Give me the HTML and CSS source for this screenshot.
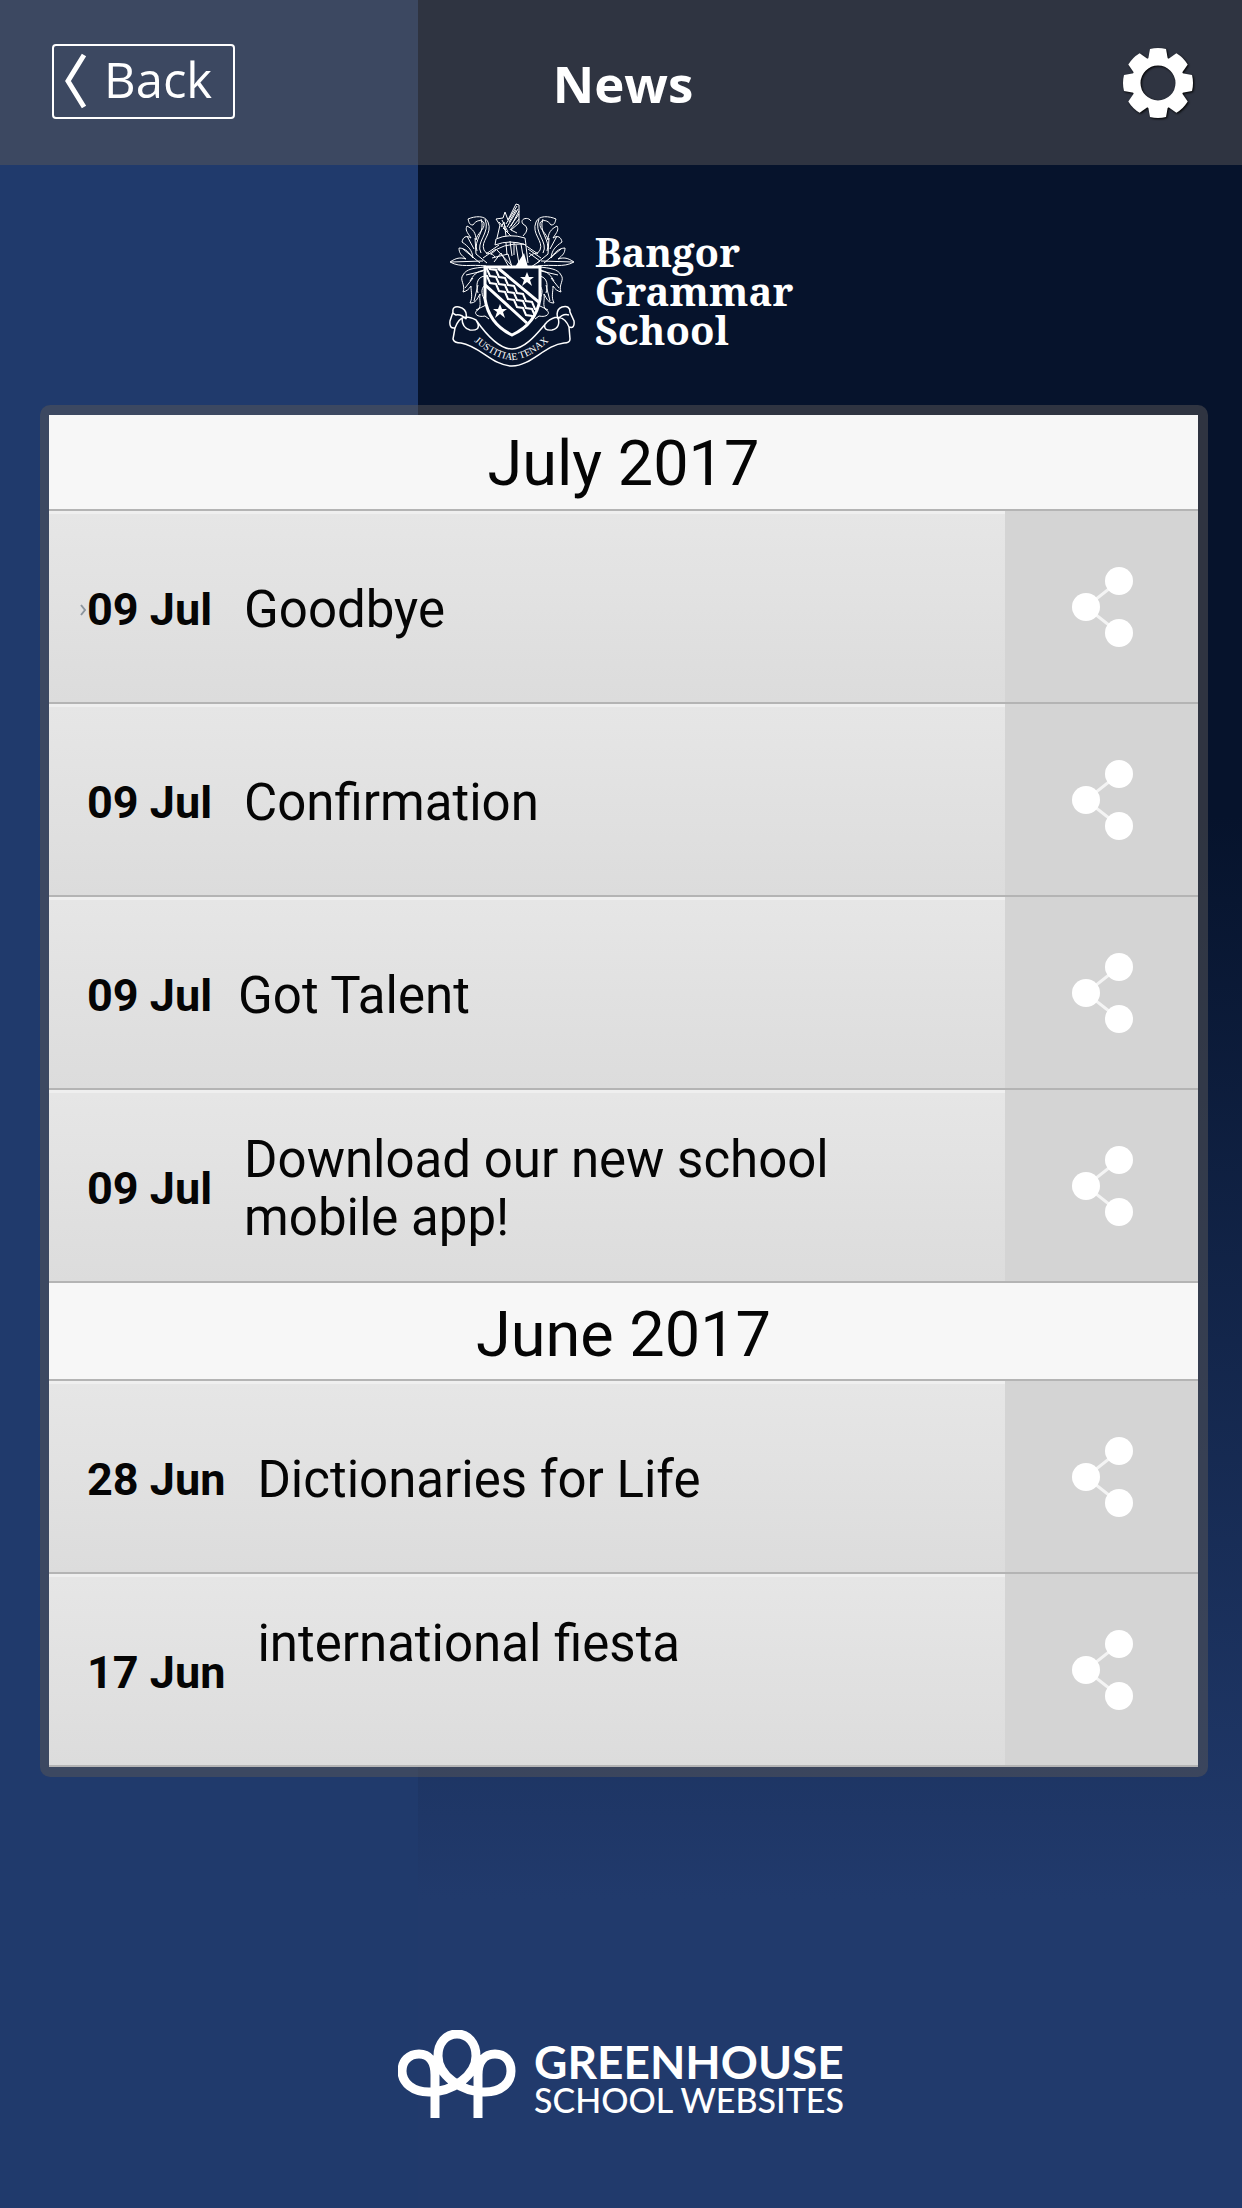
FILE: index.html
```html
<!DOCTYPE html>
<html lang="en">
<head>
<meta charset="utf-8">
<meta name="viewport" content="width=device-width, initial-scale=1">
<title>News - Bangor Grammar School</title>
<link rel="stylesheet" href="styles.css">
</head>
<body>
<svg class="defs" aria-hidden="true">
  <symbol id="share" viewBox="0 0 62 80">
    <path d="M47 14 14 40 47 66" fill="none" stroke="#f4f4f4" stroke-width="3"/>
    <circle cx="47" cy="14" r="14"/><circle cx="14" cy="40" r="14"/><circle cx="47" cy="66" r="14"/>
  </symbol>
</svg>
<header class="bar">
  <button class="back" type="button">
    <svg class="chevron" viewBox="0 0 24 56" aria-hidden="true"><path d="M20 2 4 28 20 54"/></svg>
    <span>Back</span>
  </button>
  <h1 class="title">News</h1>
  <button class="settings" type="button" aria-label="Settings">
    <svg class="gear" viewBox="-36 -36 72 72" aria-hidden="true">
      <g id="teeth">
        <path id="tooth" d="M-10-23-8-34Q0-36 8-34L10-23Z"/>
        <use href="#tooth" transform="rotate(45)"/><use href="#tooth" transform="rotate(90)"/>
        <use href="#tooth" transform="rotate(135)"/><use href="#tooth" transform="rotate(180)"/>
        <use href="#tooth" transform="rotate(225)"/><use href="#tooth" transform="rotate(270)"/>
        <use href="#tooth" transform="rotate(315)"/>
      </g>
      <circle r="22" fill="none" stroke="#fff" stroke-width="9"/>
    </svg>
  </button>
</header>
<main>
  <div class="school">
    <svg class="crest" viewBox="0 0 126 166" aria-hidden="true">
      <defs>
        <clipPath id="shield"><path d="M37 66H90V97Q86 121 63 131 41 121 37 97Z"/></clipPath>
        <g id="mantle" fill="none" stroke="#fff" stroke-width="1">
          <path d="M37 64C22 62 12 66 1 60 7 56 11 55 17 57 12 53 10 51 10 46 16 46 21 51 24 56 23 48 20 45 13 40 14 35 17 33 22 36 18 30 16 28 18 24 24 27 27 31 27 38 28 31 36 28 35 21 33 17 27 18 24 23 20 23 20 20 19 17 26 14 36 13 39 20 44 32 31 39 35 48 37 53 43 50 46 55"/>
          <path d="M36 17C42 31 26 40 32 51M32 17C37 30 24 38 28 49M26 36 27 52 38 61M14 47 31 61M2 60 34 59M18 34 25 47M37 52 50 43M34 56 47 47"/>
          <path d="M36 65C25 66 17 67 14 73 10 78 17 83 14 90 18 89 20 87 22 84 22 91 24 95 21 101 27 101 28 97 31 92 30 99 33 103 29 108 24 110 27 116 36 114L40 117M36 68C27 69 24 74 21 79M36 74C27 75 27 84 29 91M36 83C31 87 33 94 36 98M17 73 34 69M16 86 24 76M25 99 29 83M27 108 37 103"/>
        </g>
      </defs>
      <use href="#mantle"/><use href="#mantle" transform="translate(126 0) scale(-1 1)"/>
      <g fill="none" stroke="#fff" stroke-width="1">
        <path d="M46 43 47 37Q60 31 76 36L77 43Q61 37 46 43ZM48 36 51 23 47 17 54 16 56 10 59 18 67 2 70 3 70 21 62 28 68 31M58 25 69 7M57 22 68 4M60 26 70 12M61 28 70 17M52 25 55 20 57 34M74 34Q82 26 74 22C70 17 79 14 82 19M42 52Q52 41 75 42M43 56 59 52 63 65M45 60 52 51 60 65M48 48 63 64M67 43 70 62M72 42 75 60M77 44 79 61M80 51 91 59 82 65M57 41 58 53M61 39 63 54M65 40 65 53"/>
        <path d="M60 20 67 8M62 24 70 9M50 20 57 28M53 18 59 30M54 26 62 34"/>
      </g>
      <path d="m66 65 9-14 4 14Z" fill="#fff"/>
      <g clip-path="url(#shield)" fill="none" stroke="#fff">
        <path d="M49 66 92 102M34 81 80 123" stroke-width="3"/>
        <path id="wave" d="m32 59 6 1 3 7 6 1 3 7 6 1 3 7 6 1 3 7 6 1 3 7 6 1 3 7 6 1" stroke-width="2"/>
        <use href="#wave" y="7"/><use href="#wave" y="14"/>
      </g>
      <path d="M36 65H91V97Q87 122 63 133 40 122 36 97Z" fill="none" stroke="#fff" stroke-width="3"/>
      <path id="star" d="m78 70 2 5h5l-4 3 2 6-5-4-5 4 2-6-4-3h5Z" fill="#fff"/>
      <use href="#star" x="-27" y="32"/>
      <path d="M17 117Q19 107 10 105Q3 104 4 110L1 119Q0 127 6 126C11 112 19 114 27 118 34 128 49 147 63 147 77 147 90 129 98 120 106 113 115 113 120 125Q126 127 125 119L121 110Q121 103 113 105 106 108 109 117M17 117Q12 112 7 113 3 111 4 110M109 117Q114 111 120 113M6 126 4 137Q5 141 12 141C31 144 44 164 63 164S96 143 115 141Q121 141 121 137L120 125M13 116Q13 126 21 128 31 129 29 122L27 118M109 115Q112 126 103 128 94 129 96 122" fill="none" stroke="#fff" stroke-width="1.5"/>
      <path id="motto" d="M26 140Q46 157 63 158 80 157 99 140" fill="none"/>
      <text class="motto"><textPath href="#motto" startOffset="50%">JUSTITIAE TENAX</textPath></text>
    </svg>
    <p class="school-name">Bangor<br>Grammar<br>School</p>
  </div>
  <div class="panel">
    <section>
      <h2 class="month">July 2017</h2>
      <ul class="list">
        <li class="row"><a class="item" href="#"><svg class="mark" viewBox="0 0 6 12" aria-hidden="true"><path d="M1 1 5 6 1 11"/></svg><time>09 Jul</time><span>Goodbye</span></a><button class="share" type="button" aria-label="Share Goodbye"><svg><use href="#share"/></svg></button></li>
        <li class="row"><a class="item" href="#"><time>09 Jul</time><span>Confirmation</span></a><button class="share" type="button" aria-label="Share Confirmation"><svg><use href="#share"/></svg></button></li>
        <li class="row"><a class="item near" href="#"><time>09 Jul</time><span>Got Talent</span></a><button class="share" type="button" aria-label="Share Got Talent"><svg><use href="#share"/></svg></button></li>
        <li class="row"><a class="item" href="#"><time>09 Jul</time><span>Download our new school mobile app!</span></a><button class="share" type="button" aria-label="Share Download our new school mobile app!"><svg><use href="#share"/></svg></button></li>
      </ul>
    </section>
    <section>
      <h2 class="month">June 2017</h2>
      <ul class="list">
        <li class="row"><a class="item" href="#"><time>28 Jun</time><span>Dictionaries for Life</span></a><button class="share" type="button" aria-label="Share Dictionaries for Life"><svg><use href="#share"/></svg></button></li>
        <li class="row"><a class="item" href="#"><time>17 Jun</time><span class="two-line">international fiesta</span></a><button class="share" type="button" aria-label="Share international fiesta"><svg><use href="#share"/></svg></button></li>
      </ul>
    </section>
  </div>
</main>
<footer class="footer">
  <svg class="trees" viewBox="0 0 118 88" aria-hidden="true">
    <path d="M37 88V45C37 31 31 24 21 24 11 24 4 31 4 41 4 53 15 62 31 62 55 62 78 45 78 26 78 13 70 4 59 4S40 13 40 26C40 45 63 62 87 62 103 62 113 53 113 41 113 31 107 24 97 24 87 24 80 31 80 45V88"/>
  </svg>
  <p class="brand"><span class="brand-top">GREENHOUSE</span><span class="brand-sub">SCHOOL WEBSITES</span></p>
</footer>
</body>
</html>
```
FILE: styles.css
```css
* { box-sizing: border-box; }

body {
  margin: 0;
  min-height: 100vh;
  display: flex;
  flex-direction: column;
  font-family: Roboto, sans-serif;
  color: #050505;
  background:
    linear-gradient(#06132c 0, #06132c 37%, #213a6c 86%) right / calc(100% - 418px) 100% no-repeat,
    #203a6c;
}

h1, h2, p, ul { margin: 0; padding: 0; }
button { margin: 0; padding: 0; border: 0; background: none; cursor: pointer; }
.defs { position: absolute; width: 0; height: 0; }

.bar {
  display: grid;
  grid-template-columns: 1fr auto 1fr;
  align-items: center;
  height: 165px;
  padding: 0 48px 0 52px;
  background: rgba(88, 86, 86, .5);
  color: #fff;
}

.back {
  display: flex;
  align-items: center;
  gap: 16px;
  width: 183px;
  height: 75px;
  margin-bottom: 2px;
  padding: 0 0 2px 10px;
  border: 2px solid #fff;
  border-radius: 4px;
  color: #fff;
  font: 49px/60px "Open Sans", sans-serif;
}

.back span { padding-bottom: 4px; }
.chevron { width: 24px; height: 56px; fill: none; stroke: #fff; stroke-width: 5; }
.title { font: 700 51px/72px "Open Sans", sans-serif; }
.settings { justify-self: end; width: 72px; height: 72px; }
.gear { width: 72px; height: 72px; fill: #fff; filter: drop-shadow(1px 1px 1px #000); }

.school {
  display: flex;
  justify-content: center;
  align-items: center;
  gap: 20px;
  height: 240px;
  color: #fff;
}

.crest { width: 126px; height: 166px; }
.motto { font: 10px "Liberation Serif", serif; fill: #fff; text-anchor: middle; }
.school-name { padding-top: 10px; font: 700 40px/39px "Noto Serif", "Droid Serif", "DejaVu Serif", serif; }

.panel {
  margin: 0 34px 0 40px;
  padding: 10px 10px 10px 9px;
  border-radius: 10px;
  background: rgba(88, 86, 86, .5);
}

.month {
  height: 96px;
  border-bottom: 2px solid #b4b4b4;
  background: #f7f7f7;
  font-size: 63px;
  font-weight: 400;
  line-height: 98px;
  text-align: center;
}

section + section .month { height: 98px; line-height: 104px; }

.list { list-style: none; }
.row { display: flex; height: 193px; border-bottom: 2px solid #b4b4b4; }

.item {
  position: relative;
  flex: 1;
  display: flex;
  align-items: center;
  gap: 32px;
  padding: 4px 120px 0 38px;
  border-top: 3px solid #efefef;
  background: linear-gradient(#e6e6e6, #dcdcdc);
  color: inherit;
  font-size: 51px;
  line-height: 58px;
  text-decoration: none;
}

.item.near { gap: 26px; }
.item time { flex: none; font-size: 45px; font-weight: 700; }
.two-line { height: 116px; }
.mark { position: absolute; left: 31px; width: 6px; height: 12px; fill: none; stroke: #8b959e; stroke-width: 2; }

.share { display: grid; place-items: center; width: 193px; padding-left: 2px; background: #d4d4d4; }
.share svg { width: 62px; height: 80px; fill: #fff; }

.footer {
  margin-top: auto;
  display: flex;
  justify-content: center;
  gap: 18px;
  padding-bottom: 90px;
  color: #fff;
}

.trees { width: 118px; height: 88px; fill: none; stroke: #fff; stroke-width: 9; }
.brand { display: flex; flex-direction: column; padding-top: 12px; font-family: Lato, sans-serif; }
.brand-top { font-size: 46px; font-weight: 700; line-height: 40px; }
.brand-sub { font-size: 34px; font-weight: 500; line-height: 36px; }
```
